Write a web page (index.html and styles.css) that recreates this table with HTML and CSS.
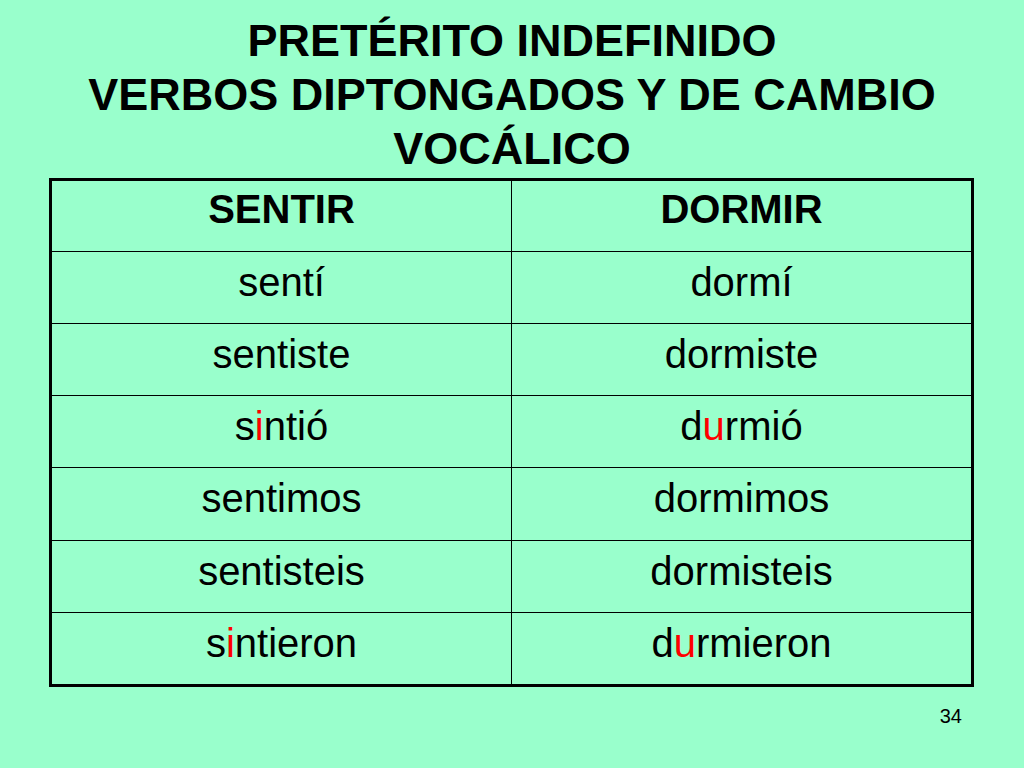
FILE: index.html
```html
<!DOCTYPE html>
<html lang="es">
<head>
<meta charset="utf-8">
<title>Pretérito indefinido</title>
<link rel="stylesheet" href="styles.css">
</head>
<body>
<div class="slide">
  <h1 class="title">PRETÉRITO INDEFINIDO<br>VERBOS DIPTONGADOS Y DE CAMBIO<br>VOCÁLICO</h1>
  <div class="table">
    <div class="row head"><div class="cell">SENTIR</div><div class="cell">DORMIR</div></div>
    <div class="row"><div class="cell">sentí</div><div class="cell">dormí</div></div>
    <div class="row"><div class="cell">sentiste</div><div class="cell">dormiste</div></div>
    <div class="row"><div class="cell">s<span class="hl">i</span>ntió</div><div class="cell">d<span class="hl">u</span>rmió</div></div>
    <div class="row"><div class="cell">sentimos</div><div class="cell">dormimos</div></div>
    <div class="row"><div class="cell">sentisteis</div><div class="cell">dormisteis</div></div>
    <div class="row"><div class="cell">s<span class="hl">i</span>ntieron</div><div class="cell">d<span class="hl">u</span>rmieron</div></div>
  </div>
  <div class="footer"><span class="pagenum">34</span></div>
</div>
</body>
</html>
```
FILE: styles.css
```css
html, body {
  margin: 0;
  padding: 0;
}
body {
  background: #99ffcc;
  font-family: "Liberation Sans", Arial, sans-serif;
  color: #000;
  width: 1024px;
  height: 768px;
  overflow: hidden;
}
.slide {
  display: flex;
  flex-direction: column;
}
.title {
  margin: 0;
  padding-top: 14px;
  font-size: 45px;
  line-height: 54px;
  font-weight: bold;
  text-align: center;
}
.table {
  margin-top: 2px;
  margin-left: 49px;
  width: 925px;
  height: 509px;
  box-sizing: border-box;
  border: 3px solid #000;
  display: flex;
  flex-direction: column;
}
.row {
  display: grid;
  grid-template-columns: 459px 1fr;
  height: 72.17px;
  box-sizing: border-box;
  border-top: 1px solid #000;
}
.row.head {
  height: 70px;
  border-top: none;
  font-weight: bold;
}
.cell {
  font-size: 40px;
  text-align: center;
  padding-top: 8px;
}
.row.head .cell {
  padding-top: 6px;
}
.cell + .cell {
  border-left: 1px solid #000;
}
.hl {
  color: #ff0000;
}
.footer {
  display: flex;
  justify-content: flex-end;
  padding-right: 62px;
  margin-top: 18px;
}
.pagenum {
  font-size: 20px;
}
```
